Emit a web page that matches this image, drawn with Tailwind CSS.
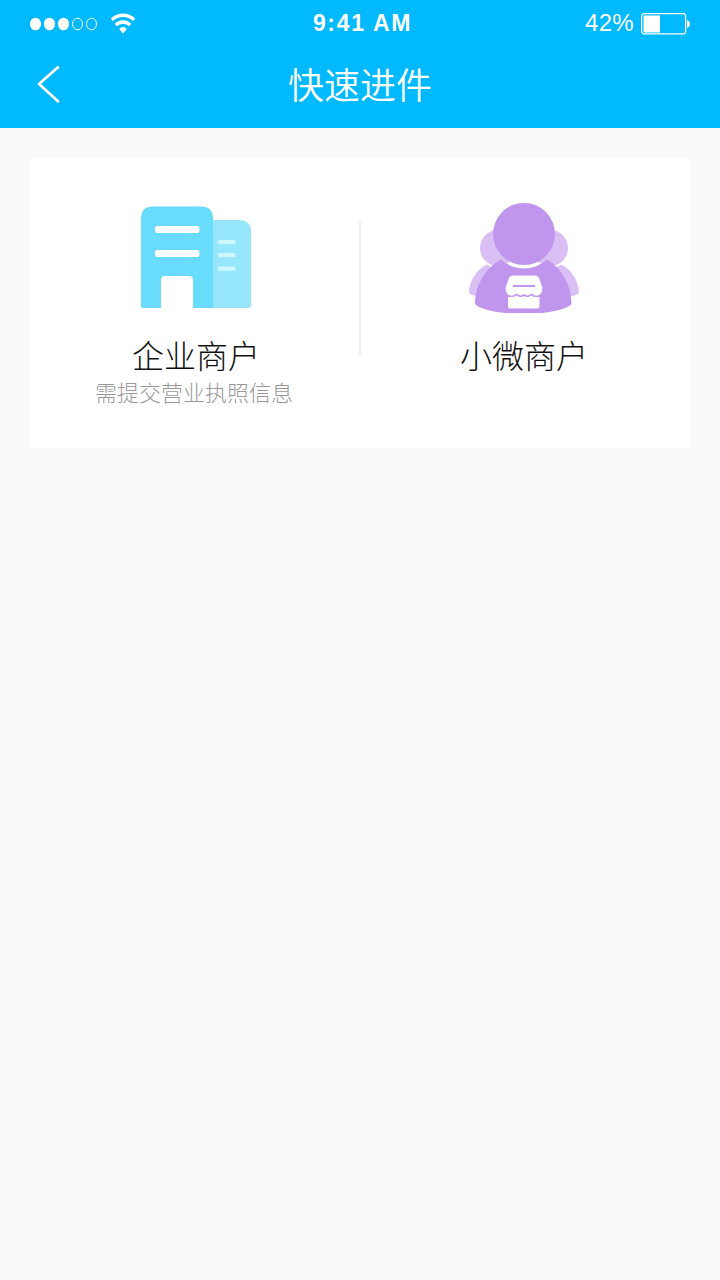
<!DOCTYPE html>
<html lang="zh-CN">

<head>
	<meta charset="UTF-8" />
	<meta name="viewport" content="width=device-width, initial-scale=1.0" />
	<title>快速进件</title>
	<script src="https://cdn.jsdelivr.net/npm/@tailwindcss/browser@4"></script>
</head>

<body class="min-h-screen bg-[#f9f9f9] font-['Noto_Sans_CJK_SC',sans-serif]">
	<header class="h-32 bg-[#00b9ff] text-white">
		<!-- Status bar -->
		<div class="grid h-12 grid-cols-3 items-center px-[30px] font-['Liberation_Sans',Arial,sans-serif]">
			<svg class="h-12 w-[106px]" viewBox="0 0 106 48" fill="none">
				<g fill="#fff">
					<ellipse cx="5.5" cy="24" rx="5.6" ry="6.3" />
					<ellipse cx="19.5" cy="24" rx="5.6" ry="6.3" />
					<ellipse cx="33.5" cy="24" rx="5.6" ry="6.3" />
				</g>
				<g stroke="#fff">
					<ellipse cx="47.5" cy="24" rx="5" ry="5.8" />
					<ellipse cx="61.5" cy="24" rx="5" ry="5.8" />
				</g>
				<g stroke="#fff" stroke-width="3.3">
					<path d="M81.8 19.8C88.5 13.7 97.5 13.7 104.2 19.8" />
					<path d="M85.8 25C90 21 96 21 100.2 25" />
				</g>
				<path d="M89.2 29.1C91.4 26.4 94.6 26.4 96.8 29.1L93 33.5Z" fill="#fff" />
			</svg>
			<div class="relative -top-px left-[2.5px] text-center text-[23px] font-bold tracking-[1.7px]">9:41 AM</div>
			<div class="flex items-center justify-end gap-[7px]">
				<span class="relative -top-px text-2xl tracking-[0.3px]">42%</span>
				<svg class="h-[22px] w-[49px]" viewBox="0 0 49 22" fill="none">
					<rect x="0.6" y="0.6" width="44" height="20.3" rx="2.5" stroke="#fff" stroke-width="1.2" />
					<path d="M2.5 2.5H19V19.5H2.5Z" fill="#fff" />
					<path d="M46 7C50 8.5 50 13.5 46 15Z" fill="#fff" />
				</svg>
			</div>
		</div>
		<!-- Title bar -->
		<div class="grid h-20 grid-cols-[60px_1fr_60px] items-center px-[30px]">
			<svg class="h-20 w-10" viewBox="0 0 40 80" fill="none" stroke="#fff" stroke-width="2.8" stroke-linecap="round" stroke-linejoin="round">
				<path d="M28 19.3L9 36L28 53.2" />
			</svg>
			<h1 class="relative -top-[5px] text-center text-4xl font-[350]">快速进件</h1>
		</div>
	</header>

	<main class="px-[30px] pt-[30px]">
		<section class="flex h-[290px] bg-white">
			<a class="flex flex-1 flex-col items-center pt-[45px]">
				<svg class="ml-[3px] size-[110px]" viewBox="0 0 110 110">
					<path d="M70 17H98Q110 17 110 29V102.5Q110 105 107.5 105H70Z" fill="#96e6fc" />
					<path d="M0 15.5Q0 3.5 12 3.5H60Q72 3.5 72 15.5V105H52V77Q52 73 48 73H24Q20 73 20 77V105H2.5Q0 105 0 102.5Z" fill="#68dcfa" />
					<g fill="#fff">
						<rect x="14" y="23" width="44.5" height="7" rx="2.5" />
						<rect x="14" y="47" width="44.5" height="7" rx="2.5" />
					</g>
					<g fill="#cdf6ff">
						<rect x="77" y="37" width="17.5" height="4.2" rx="1.5" />
						<rect x="77" y="50" width="17.5" height="4.2" rx="1.5" />
						<rect x="77" y="63.5" width="17.5" height="4.2" rx="1.5" />
					</g>
				</svg>
				<h2 class="ml-[3px] mt-[17px] text-[32px] leading-[48px] font-light text-[#111]">企业商户</h2>
				<p class="-ml-px text-[22px] leading-[26px] font-light text-[#999]">需提交营业执照信息</p>
			</a>
			<div class="mt-16 h-[133px] w-0.5 bg-[#f0f0f0]"></div>
			<a class="flex flex-1 flex-col items-center pt-[45px]">
				<svg class="-ml-[3px] size-[110px]" viewBox="0 0 110 110">
					<g fill="#d9bff4">
						<circle cx="29" cy="45" r="18" />
						<circle cx="81" cy="45" r="18" />
						<path d="M18 61.5C8 66 0 78 0 90Q3 93 8 93L34 66Q25 67 18 61.5Z" />
						<path d="M92 61.5C102 66 110 78 110 90Q107 93 102 93L76 66Q85 67 92 61.5Z" />
					</g>
					<path d="M32 56.5C18 64 6 81 6 101C18 114 91 114 102.5 101C102.5 81 91 64 78 56.5A34 34 0 0 1 32 56.5Z" fill="#bf95ed" />
					<circle cx="55" cy="31" r="31" fill="#bf95ed" />
					<!-- Shop badge -->
					<path d="M44 72.5H66Q69 72.5 70 75L73 83.5C74.5 89 71 93.5 66.5 92.5Q64 92 62 90.5Q59 94 55 91Q51 94 48 90.5Q46 92 43.5 92.5C39 93.5 35.5 89 37 83.5L40 75Q41 72.5 44 72.5Z" fill="#fff" />
					<path d="M39 94Q45 94.5 48 92.5Q51 95.5 55 93Q59 95.5 62 92.5Q65 94.5 70.5 94V103Q70.5 105.5 68 105.5H41.5Q39 105.5 39 103Z" fill="#fff" />
					<path d="M44.5 83H65.5" stroke="#bf95ed" stroke-width="2" stroke-linecap="round" />
				</svg>
				<h2 class="-ml-[3px] mt-[17px] text-[32px] leading-[48px] font-light text-[#111]">小微商户</h2>
			</a>
		</section>
	</main>
</body>

</html>
